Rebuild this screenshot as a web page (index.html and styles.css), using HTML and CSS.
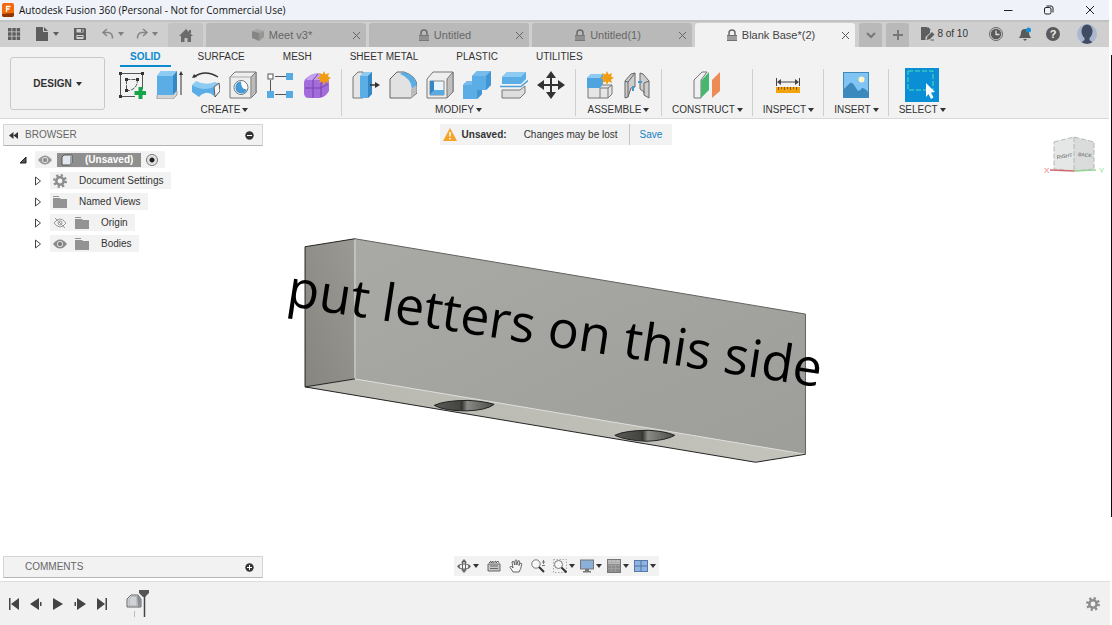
FILE: index.html
```html
<!DOCTYPE html>
<html lang="en">
<head>
    <meta charset="UTF-8">
    <meta name="viewport" content="width=device-width, initial-scale=1.0">
    <title>Autodesk Fusion 360</title>
    <link rel="stylesheet" href="styles.css">
</head>
<body>

<header class="titlebar">
    <svg class="app-logo" width="12" height="14" viewBox="0 0 12 14"><rect width="12" height="14" rx="2" fill="#f26a0c"/><path d="M0 11l12-1v2a2 2 0 0 1-2 2H2a2 2 0 0 1-2-2z" fill="#8f3405"/><path d="M4.500 9V3.500H8.500M4.500 6H7.500" fill="none" stroke="#fff" stroke-width="1.300"/></svg>
    <h1>Autodesk Fusion 360 (Personal - Not for Commercial Use)</h1>
    <div class="window-buttons">
        <button aria-label="Minimize"><svg width="12" height="12" viewBox="0 0 12 12"><path d="M2 6.500h8.500" stroke="#222"/></svg></button>
        <button aria-label="Restore"><svg width="12" height="12" viewBox="0 0 12 12" fill="none" stroke="#222"><rect x="1.500" y="3.500" width="6.500" height="6.500" rx="1.500"/><path d="M3.500 2h4.500a2 2 0 0 1 2 2v4.500"/></svg></button>
        <button aria-label="Close"><svg width="12" height="12" viewBox="0 0 12 12"><path d="M2 2l8 8M10 2l-8 8" stroke="#222"/></svg></button>
    </div>
</header>

<nav class="docbar">
    <div class="quick">
        <button aria-label="Data panel"><svg width="14" height="14" viewBox="0 0 14 14" fill="#5e5e5e"><path d="M1 1h3.500v3.500H1zM5.300 1h3.500v3.500H5.300zM9.600 1h3.500v3.500H9.600zM1 5.300h3.500v3.500H1zM5.300 5.300h3.500v3.500H5.300zM9.600 5.300h3.500v3.500H9.600zM1 9.600h3.500v3.500H1zM5.300 9.600h3.500v3.500H5.300zM9.600 9.600h3.500v3.500H9.600z"/></svg></button>
        <button aria-label="File"><svg width="14" height="14" viewBox="0 0 14 14" fill="#5e5e5e"><path d="M1 0h7v5h5v9H1zM9 0l4 4H9z"/></svg><i class="caret"></i></button>
        <button aria-label="Save"><svg width="14" height="14" viewBox="0 0 14 14" fill="#5e5e5e"><path fill-rule="evenodd" d="M1 1h11l1 1v11H1zM3.500 2v3.500h7V2zM3.500 8v4h7V8z"/><path d="M8 2h1.500v3H8zM4.500 9h5v1h-5z"/></svg></button>
        <button class="faded" aria-label="Undo"><svg width="14" height="14" viewBox="0 0 14 14" fill="none" stroke="#666" stroke-width="1.500"><path d="M6 2L2 5.500 6 9M2 5.500h5.500q4 .5 4 6"/></svg><i class="caret"></i></button>
        <button class="faded" aria-label="Redo"><svg width="14" height="14" viewBox="0 0 14 14" fill="none" stroke="#666" stroke-width="1.500"><path d="M8 2l4 3.500L8 9M12 5.500H6.500q-4 .5-4 6"/></svg><i class="caret"></i></button>
    </div>
    <div class="tabs">
        <button class="home-tab" aria-label="Home"><svg width="14" height="13" viewBox="0 0 14 13" fill="#6b6b6b"><path d="M7 0l7 7H12v6H8.500V9h-3v4H2V7H0zM10 1h2v3h-2z"/></svg></button>
        <div class="tab">
            <button class="tab-name"><svg width="14" height="14" viewBox="0 0 14 14"><path d="M1 3l6-2 6 2-5 2z" fill="#a5a5a5"/><path d="M1 3l7 2v8L1 10z" fill="#858585"/><path d="M8 5l5-2v6l-5 4z" fill="#969696"/></svg>Meet v3*</button>
            <button class="tab-close" aria-label="Close tab"><svg width="9" height="9" viewBox="0 0 9 9"><path d="M1 1l7 7M8 1L1 8" stroke="#666"/></svg></button>
        </div>
        <div class="tab">
            <button class="tab-name"><svg width="12" height="13" viewBox="0 0 12 13"><path d="M3 6V4a3 3 0 0 1 6 0v2" fill="none" stroke="#6a6a6a" stroke-width="1.500"/><path d="M1 6h10v6H1z" fill="#777"/><path d="M1 8h10M1 10h10" stroke="#aaa"/></svg>Untitled</button>
            <button class="tab-close" aria-label="Close tab"><svg width="9" height="9" viewBox="0 0 9 9"><path d="M1 1l7 7M8 1L1 8" stroke="#666"/></svg></button>
        </div>
        <div class="tab">
            <button class="tab-name"><svg width="12" height="13" viewBox="0 0 12 13"><path d="M3 6V4a3 3 0 0 1 6 0v2" fill="none" stroke="#6a6a6a" stroke-width="1.500"/><path d="M1 6h10v6H1z" fill="#777"/><path d="M1 8h10M1 10h10" stroke="#aaa"/></svg>Untitled(1)</button>
            <button class="tab-close" aria-label="Close tab"><svg width="9" height="9" viewBox="0 0 9 9"><path d="M1 1l7 7M8 1L1 8" stroke="#666"/></svg></button>
        </div>
        <div class="tab active">
            <button class="tab-name"><svg width="12" height="13" viewBox="0 0 12 13"><path d="M3 6V4a3 3 0 0 1 6 0v2" fill="none" stroke="#6a6a6a" stroke-width="1.500"/><path d="M1 6h10v6H1z" fill="#707070"/><path d="M1 8h10M1 10h10" stroke="#ccc"/></svg>Blank Base*(2)</button>
            <button class="tab-close" aria-label="Close tab"><svg width="9" height="9" viewBox="0 0 9 9"><path d="M1 1l7 7M8 1L1 8" stroke="#555"/></svg></button>
        </div>
        <button class="small-tab" aria-label="More tabs"><svg width="12" height="12" viewBox="0 0 12 12"><path d="M2 4l4 4 4-4" fill="none" stroke="#777" stroke-width="2"/></svg></button>
        <button class="small-tab" aria-label="New tab"><svg width="12" height="12" viewBox="0 0 12 12"><path d="M6 1v10M1 6h10" stroke="#777" stroke-width="2"/></svg></button>
    </div>
    <div class="account">
        <button class="quota"><svg width="15" height="14" viewBox="0 0 15 14"><path d="M1 0h6l3 3v3L5.500 10v3H1z" fill="#5e5e5e"/><path d="M8 0l3 3H8z" fill="#5e5e5e"/><path d="M6.500 13l1-3.500L12 5l2.500 2.500L10 12z" fill="#5e5e5e"/><path d="M10.500 13H14" stroke="#5e5e5e"/></svg>8 of 10</button>
        <button aria-label="Job status"><svg width="16" height="16" viewBox="0 0 16 16"><circle cx="8" cy="8" r="6.500" fill="none" stroke="#666"/><circle cx="8" cy="8" r="5.200" fill="#5a5a5a"/><path d="M8 4.500V8.500h3.500" fill="none" stroke="#ddd" stroke-width="1.300"/></svg></button>
        <button aria-label="Notifications"><svg width="16" height="16" viewBox="0 0 16 16"><path d="M1.500 12q2-1 2.500-5 0-4 4-4t4 4q.5 4 2.500 5zM6 13h4l-2 2z" fill="#5a5a5a"/><circle cx="11.500" cy="4" r="2.500" fill="#1590dc"/></svg></button>
        <button class="help" aria-label="Help"><span>?</span></button>
        <button aria-label="Profile"><svg width="20" height="20" viewBox="0 0 20 20"><defs><clipPath id="face"><circle cx="10" cy="10" r="10"/></clipPath></defs><g clip-path="url(#face)"><rect width="20" height="20" fill="#a9b7cf"/><ellipse cx="10" cy="7.500" rx="5.500" ry="7" fill="#414b61"/><path d="M7.500 12h5v4l5 4h-15l5-4z" fill="#414b61"/></g></svg></button>
    </div>
</nav>

<section class="ribbon">
    <button class="design">DESIGN <i class="caret"></i></button>
    <div class="ribbon-main">
        <div class="ribbon-tabs">
            <button class="current">SOLID</button>
            <button>SURFACE</button>
            <button>MESH</button>
            <button>SHEET METAL</button>
            <button>PLASTIC</button>
            <button>UTILITIES</button>
        </div>
        <div class="groups">
            <div class="group">
                <div class="icons">
                    <button aria-label="Create sketch"><svg viewBox="0 0 28 28"><g fill="none" stroke="#555"><path d="M3 2.500h20M2.500 3v22M3 25.500h14M24.500 4v14"/><path d="M8.500 8.500h11q0 9-8 11h-3z" stroke-dasharray="4 1"/></g><path d="M1 1h3v3H1zM23 1h3v3h-3zM1 24h3v3H1zM7 7h3v3H7zM18 7h3v3h-3zM7 18h3v3H7z" fill="#333"/><path d="M20.500 16h4v4h4v4h-4v4h-4v-4h-4v-4h4z" fill="#17a349"/></svg></button>
                    <button aria-label="Extrude"><svg viewBox="0 0 28 28"><path d="M2 24l4-4h16v4l-4 4H2z" fill="#d3d3d3" stroke="#888" stroke-width=".7"/><path d="M2 5l4-5h16v19l-4 5H2z" fill="#5bade6"/><path d="M2 5l4-5h16l-4 5z" fill="#8dcbf3"/><path d="M18 5l4-5v19l-4 5z" fill="#3486c5"/><path d="M26 24V2" stroke="#333"/><path d="M26 0l2 4h-4z" fill="#333"/></svg></button>
                    <button aria-label="Revolve"><svg viewBox="0 0 28 28"><path d="M2 6q11-8 24 0" fill="none" stroke="#333" stroke-width="1.300"/><path d="M0 7l2-4 3 3z" fill="#333"/><path d="M0 14l4-4q10 5 19 1l5 2-5 5q-9 3-17 0z" fill="#8dcbf3"/><path d="M0 14q11 7 22 2v9q-4-4-9-3-4 1-6 4l-7-5z" fill="#5bade6"/><path d="M22 16l5-4 1 8-5 6z" fill="#f4f4f4" stroke="#555"/></svg></button>
                    <button aria-label="Hole"><svg viewBox="0 0 28 28" stroke="#777"><path d="M1 6l5-5h21v21l-5 5H1z" fill="#eee"/><path d="M22 6l5-5v21l-5 5z" fill="#bbb"/><path d="M1 6h21v21" fill="none" stroke="#aaa"/><circle cx="12" cy="16.500" r="7" fill="#fff"/><path d="M12 10.500a6 6 0 1 0 6 8q-6 0-6-8z" fill="#469bd6" stroke="none"/></svg></button>
                    <button aria-label="Pattern"><svg viewBox="0 0 28 28"><path d="M9 5.500h11M4.500 9v11M9 23.500h11" stroke="#555"/><rect x="2" y="3" width="5" height="5" fill="#fff" stroke="#555"/><path d="M20 2h7v7h-7zM1 20h7v7H1zM20 20h7v7h-7z" fill="#58aae3"/></svg></button>
                    <button aria-label="Create form"><svg viewBox="0 0 28 28"><path d="M5 6q5-5 14-3 7 0 7 9v8q-4 7-10 7H6q-5 0-5-5V12q0-4 4-6z" fill="#a36cdb"/><path d="M5 6q5-5 14-3l2 2-4 4H3z" fill="#c5a0ec"/><path d="M2 17h16l7-4M10 9v18M18 9v17M10 9l5-6" stroke="#7641ae" fill="none"/><path d="M21 0l1.500 3.500L26 2l-1 3.500L28 7l-3 1.500L26 12l-3.500-1.500L21 14l-1.500-3.500L16 12l1.500-3.500L14 7l3.500-1.500L16 2l3.500 1.500z" fill="#f29c11"/></svg></button>
                </div>
                <button class="group-name">CREATE<i class="caret"></i></button>
            </div>
            <div class="group">
                <div class="icons">
                    <button aria-label="Press pull"><svg viewBox="0 0 28 28"><path d="M1 6l5-5h5v26H1z" fill="#e5e5e5" stroke="#777"/><path d="M8 5l4-4h8v22l-4 4H8z" fill="#5bade6"/><path d="M8 5l4-4h8l-4 4z" fill="#8dcbf3"/><path d="M16 5l4-4v22l-4 4z" fill="#3486c5"/><path d="M18 14h7" stroke="#333" stroke-width="1.500"/><path d="M23 11l5 3-5 3z" fill="#333"/></svg></button>
                    <button aria-label="Fillet"><svg viewBox="0 0 28 28"><path d="M1 8l7-7h7q13 4 13 15v6l-6 5H1z" fill="#e2e2e2" stroke="#666"/><path d="M11 3l3-2q12 3 14 13l-5 4Q22 7 11 3z" fill="#5bade6"/><path d="M22 18l5-3v7l-5 5z" fill="#bbb"/></svg></button>
                    <button aria-label="Shell"><svg viewBox="0 0 28 28"><path d="M1 8l6-7h20v20l-6 6H1z" fill="#eee" stroke="#777"/><path d="M21 8l6-7v20l-6 6z" fill="#c0c0c0" stroke="#777"/><path d="M4 10h14v14H4z" fill="#e9f4fc" stroke="#888"/><path d="M4 10h4v10l-4 4z" fill="#3486c5"/><path d="M4 24l4-5h10v5z" fill="#58aae3"/></svg></button>
                    <button aria-label="Combine"><svg viewBox="0 0 28 28"><path d="M0 14l4-4h5V5l5-5h14v14l-5 5h-4v4l-5 5H0z" fill="#5bade6"/><path d="M9 5l5-5h14l-5 5zM0 14l4-4h5v4z" fill="#75bcec"/><path d="M23 5l5-5v14l-5 5h-4v4l-5 5v-9h9z" fill="#4296d3"/></svg></button>
                    <button aria-label="Split body"><svg viewBox="0 0 28 28"><path d="M2 19h18l5-4v7l-5 5H2z" fill="#dedede" stroke="#777"/><path d="M2 6l5-5h19v7l-5 5H2z" fill="#5bade6"/><path d="M2 6l5-5h19l-5 5z" fill="#8dcbf3"/><path d="M0 15.500h21l7-6" fill="none" stroke="#4d9fd8" stroke-width="1.500"/></svg></button>
                    <button aria-label="Move"><svg viewBox="0 0 28 28"><path d="M14 4v20M4 14h20" stroke="#333" stroke-width="2"/><path d="M14 0l5 7H9zM14 28l5-7H9zM0 14l7-5v10zM28 14l-7-5v10z" fill="#333"/></svg></button>
                </div>
                <button class="group-name">MODIFY<i class="caret"></i></button>
            </div>
            <div class="group">
                <div class="icons">
                    <button aria-label="New component"><svg viewBox="0 0 28 28"><path d="M2 16h12v-2h12v9l-4 4H2z" fill="#e5e5e5" stroke="#777"/><path d="M14 17v10M14 17h8v10M22 17l4-3" fill="none" stroke="#777"/><path d="M1 7l4-4h12v10l-3 4H1z" fill="#4fa3df"/><path d="M1 7l4-4h12l-3 4z" fill="#8dcbf3"/><path d="M21 0l1.500 3.500L26 2l-1 3.500L28 7l-3 1.500L26 12l-3.500-1.500L21 14l-1.500-3.500L16 12l1.500-3.500L14 7l3.500-1.500L16 2l3.500 1.500z" fill="#f29c11"/></svg></button>
                    <button aria-label="Joint"><svg viewBox="0 0 28 28" stroke="#666"><path d="M2 10l6-7 4-1v14l-4 1-3 9-3 1z" fill="#cdcdcd"/><path d="M26 10l-6-7-3-1v16l4 3v3l5 3z" fill="#cdcdcd"/><path d="M2 10l3 1 7-9M5 11v15M26 10l-5 2v10" fill="none"/><path d="M10 15v5M15 11h4" stroke="#4398d4" stroke-width="2"/></svg></button>
                </div>
                <button class="group-name">ASSEMBLE<i class="caret"></i></button>
            </div>
            <div class="group">
                <div class="icons">
                    <button aria-label="Offset plane"><svg viewBox="0 0 28 28"><path d="M1 9l8-8h5l-6 8v18H1z" fill="#f0f0f0" stroke="#777"/><path d="M8 10l8-9v18l-8 8z" fill="#46b86e"/><path d="M19 9l8-8v19l-8 7z" fill="#ec8b56"/></svg></button>
                </div>
                <button class="group-name">CONSTRUCT<i class="caret"></i></button>
            </div>
            <div class="group">
                <div class="icons">
                    <button aria-label="Measure"><svg viewBox="0 0 28 28"><path d="M2.500 7v8M25.500 7v8M4 11h20" stroke="#444"/><path d="M3 11l4-3v6zM25 11l-4-3v6z" fill="#444"/><path d="M2 16h24v6H2z" fill="#f1a20d"/><path d="M4.500 16v3M7.500 16v2M10.500 16v3M13.500 16v2M16.500 16v3M19.500 16v2M22.500 16v3" stroke="#8d5d00"/></svg></button>
                </div>
                <button class="group-name">INSPECT<i class="caret"></i></button>
            </div>
            <div class="group">
                <div class="icons">
                    <button aria-label="Insert image"><svg viewBox="0 0 28 28"><rect x="1.500" y="1.500" width="25" height="25" fill="#80c4f3" stroke="#3e8abc"/><circle cx="19.500" cy="8.500" r="3" fill="#fff4c2"/><path d="M2 18l6-6q2-1 4 2l4 6q2 0 4-3 3 0 6 4v5H2z" fill="#3b89bd"/></svg></button>
                </div>
                <button class="group-name">INSERT<i class="caret"></i></button>
            </div>
            <div class="group">
                <div class="icons">
                    <button class="selected" aria-label="Select"><svg viewBox="0 0 34 34"><rect x="3" y="3" width="25" height="19" fill="none" stroke="#4fe0b5" stroke-dasharray="5 2"/><path d="M21 15l9 9-4 .5 2.500 5-2.500 1.500-2.500-5-2.500 3z" fill="#fff"/></svg></button>
                </div>
                <button class="group-name">SELECT<i class="caret"></i></button>
            </div>
        </div>
    </div>
</section>

<main class="workspace">
    <svg class="scene" viewBox="0 119 1112 463">
        <defs>
            <linearGradient id="front" x1="0" y1="0" x2="1" y2="1"><stop offset="0" stop-color="#a9aaa6"/><stop offset="1" stop-color="#9d9e9a"/></linearGradient>
            <linearGradient id="side" x1="1" y1="0" x2="0" y2="1"><stop offset="0" stop-color="#9a9993"/><stop offset="1" stop-color="#86857f"/></linearGradient>
            <linearGradient id="base" x1="0" y1="0" x2="1" y2="0"><stop offset="0" stop-color="#b8b7b0"/><stop offset="1" stop-color="#c3c2bb"/></linearGradient>
            <linearGradient id="hole" x1="0" y1="0" x2="1" y2="0"><stop offset="0" stop-color="#595955"/><stop offset=".42" stop-color="#454542"/><stop offset=".46" stop-color="#333"/><stop offset=".55" stop-color="#8a8a86"/><stop offset="1" stop-color="#4a4a47"/></linearGradient>
        </defs>
        <path d="M304.500 247L354.500 239V379.500L304.500 387.500z" fill="url(#side)"/>
        <path d="M354.500 239L806 314.500V455L354.500 379.500z" fill="url(#front)"/>
        <path d="M304.500 387.500L354.500 379.500L806 455L756 463z" fill="url(#base)"/>
        <path d="M354.500 239V379.500L806 455" fill="none" stroke="#dcdcd8"/>
        <path d="M354.500 239L806 314.500V455" fill="none" stroke="#60605d"/>
        <path d="M354.500 239L304.500 247V387.500L354.500 379.500M304.500 387.500L756 463L806 455" fill="none" stroke="#222"/>
        <path d="M434 406q10-5 34-5 17 1 26 4-8 6-28 6.500-22 0-32-5.500z" fill="url(#hole)" stroke="#222"/>
        <path d="M615 436q10-5 34-5 17 1 26 5-8 5-28 6-22-1-32-6z" fill="url(#hole)" stroke="#222"/>
        <text class="model-text" x="285" y="306" transform="rotate(8.700 285 306)">put letters on this side</text>
    </svg>

    <div class="left">
        <div class="browser">
            <div class="panel">
                <button aria-label="Collapse"><svg width="9" height="7" viewBox="0 0 9 7"><path d="M4.500 0v7L0 3.500zM9 0v7L4.500 3.500z" fill="#333"/></svg></button>
                <h2>BROWSER</h2>
                <button aria-label="Hide"><svg width="9" height="9" viewBox="0 0 9 9"><circle cx="4.500" cy="4.500" r="4.200" fill="#333"/><path d="M2 4.500h5" stroke="#fff"/></svg></button>
            </div>
            <ul class="tree">
                <li class="root">
                    <svg width="10" height="10" viewBox="0 0 10 10"><path d="M8 2v6H2z" fill="#555" stroke="#222"/></svg>
                    <div class="node">
                        <svg width="14" height="12" viewBox="0 0 14 12"><path d="M0 6q7-9 14 0-7 9-14 0z" fill="#999"/><circle cx="7" cy="6" r="3" fill="#ddd"/><circle cx="7" cy="6" r="2" fill="#888"/></svg>
                        <span class="component"><svg width="12" height="12" viewBox="0 0 12 12"><path d="M1 3l2-2h8v8l-2 2H1z" fill="#e3e7ec" stroke="#555"/><path d="M9 3l2-2v8l-2 2z" fill="#9ea5ad"/></svg><span id="root-name">(Unsaved)</span></span>
                        <input type="radio" aria-labelledby="root-name" checked>
                    </div>
                </li>
                <li>
                    <svg width="10" height="10" viewBox="0 0 10 10"><path d="M2.500 1l5 4-5 4z" fill="#fff" stroke="#444"/></svg>
                    <div class="node">
                        <svg width="14" height="14" viewBox="0 0 14 14" fill="none" stroke="#8c8c8c"><circle cx="7" cy="7" r="3.700" stroke-width="2.500"/><circle cx="7" cy="7" r="5.700" stroke-width="2.500" stroke-dasharray="2.200 2.270"/></svg>
                        <span>Document Settings</span>
                    </div>
                </li>
                <li>
                    <svg width="10" height="10" viewBox="0 0 10 10"><path d="M2.500 1l5 4-5 4z" fill="#fff" stroke="#444"/></svg>
                    <div class="node">
                        <svg width="14" height="12" viewBox="0 0 14 12"><path d="M0 0h6v1H0zM0 2h7l1 1h6v9H0z" fill="#939393"/></svg>
                        <span>Named Views</span>
                    </div>
                </li>
                <li>
                    <svg width="10" height="10" viewBox="0 0 10 10"><path d="M2.500 1l5 4-5 4z" fill="#fff" stroke="#444"/></svg>
                    <div class="node">
                        <svg width="14" height="12" viewBox="0 0 14 12" fill="none" stroke="#999"><path d="M1 6q6-8 12 0-6 8-12 0zM2 1l10 10"/><circle cx="7" cy="6" r="2"/></svg>
                        <svg width="14" height="12" viewBox="0 0 14 12"><path d="M0 0h6v1H0zM0 2h7l1 1h6v9H0z" fill="#939393"/></svg>
                        <span>Origin</span>
                    </div>
                </li>
                <li>
                    <svg width="10" height="10" viewBox="0 0 10 10"><path d="M2.500 1l5 4-5 4z" fill="#fff" stroke="#444"/></svg>
                    <div class="node">
                        <svg width="14" height="12" viewBox="0 0 14 12"><path d="M0 6q7-9 14 0-7 9-14 0z" fill="#8a8a8a"/><circle cx="7" cy="6" r="3" fill="#ddd"/><circle cx="7" cy="6" r="2" fill="#777"/></svg>
                        <svg width="14" height="12" viewBox="0 0 14 12"><path d="M0 0h6v1H0zM0 2h7l1 1h6v9H0z" fill="#939393"/></svg>
                        <span>Bodies</span>
                    </div>
                </li>
            </ul>
        </div>
        <div class="panel comments">
            <h2>COMMENTS</h2>
            <button aria-label="Add comment"><svg width="9" height="9" viewBox="0 0 9 9"><circle cx="4.500" cy="4.500" r="4.200" fill="#333"/><path d="M2 4.500h5M4.500 2v5" stroke="#fff"/></svg></button>
        </div>
    </div>

    <div class="center">
        <div class="notice">
            <svg width="14" height="13" viewBox="0 0 14 13"><path d="M7 0l7 13H0z" fill="#f5a327"/><path d="M7 4v4.500M7 10v1.500" stroke="#fff" stroke-width="1.500"/></svg>
            <strong>Unsaved:</strong>
            <span>Changes may be lost</span>
            <button>Save</button>
        </div>
        <div class="navbar">
            <button aria-label="Orbit"><svg width="14" height="14" viewBox="0 0 14 14" fill="none" stroke="#666"><ellipse cx="7" cy="7.500" rx="5.500" ry="2.500"/><path d="M5.500 3v8M8.500 3v8"/><path d="M4 3.500l3-3.500 3 3.500zM4 10.500L7 14l3-3.500zM2.500 5L0 7.500 3 10zM11.500 5L14 7.500 11 10z" fill="#666" stroke="none"/></svg><i class="caret"></i></button>
            <button aria-label="Look at"><svg width="14" height="14" viewBox="0 0 14 14"><path d="M1 5h12v7H1z" fill="#c9c9c9" stroke="#666"/><path d="M2 4l2-2v2l2-2v2l3-2v2l2-2 1 2" fill="none" stroke="#666"/><path d="M3 7h8M3 9.500h8" stroke="#666"/></svg></button>
            <button aria-label="Pan"><svg width="14" height="14" viewBox="0 0 14 14"><path d="M4 13Q3 11 1 8.500q0-1.500 1.500-1L4 9 3 3q1-1.500 2 0l.8 3L6 1.500q1-1.500 1.800 0V6L9 2q1.500-1 1.500 .5L10 6.500 11.500 4q1.500 0 1.200 1.500Q12 10 10 13z" fill="#f6f6f6" stroke="#555" stroke-width=".9"/></svg></button>
            <button aria-label="Zoom"><svg width="14" height="14" viewBox="0 0 14 14"><circle cx="5" cy="5" r="4.200" fill="#f8f8f8" stroke="#777"/><path d="M8 8l5 5" stroke="#333" stroke-width="2"/><path d="M12.500 1v4M11 3h3M11 6.500h3" stroke="#777"/></svg></button>
            <button aria-label="Fit"><svg width="14" height="14" viewBox="0 0 14 14"><rect x=".5" y=".5" width="13" height="13" fill="none" stroke="#aaa" stroke-dasharray="1.500 1.500"/><circle cx="5.500" cy="5.500" r="4" fill="#f8f8f8" stroke="#777"/><path d="M8.500 8.500l5 5" stroke="#333" stroke-width="2"/></svg><i class="caret"></i></button>
            <button aria-label="Display settings"><svg width="14" height="14" viewBox="0 0 14 14"><rect x=".5" y="1" width="13" height="9" fill="#8bb0da" stroke="#777"/><path d="M5 10h4v2h2v1.500H3V12h2z" fill="#777"/></svg><i class="caret"></i></button>
            <button aria-label="Grid and snaps"><svg width="14" height="14" viewBox="0 0 14 14"><path d="M1 1h12v4H1z" fill="#bbb"/><path d="M1 5h12v8H1z" fill="#8c8c8c"/><path d="M1 3.500h12M1 6.500h12M1 9.500h12M4.500 1v12M8.500 1v12" stroke="#a9a9a9" stroke-width=".6"/><rect x=".5" y=".5" width="13" height="13" fill="none" stroke="#777"/></svg><i class="caret"></i></button>
            <button aria-label="Viewports"><svg width="14" height="14" viewBox="0 0 14 14"><rect x=".5" y="1.500" width="13" height="11" fill="#8eb4df" stroke="#557ba8"/><path d="M7 2v10M1 7h12" stroke="#4b73a3"/></svg><i class="caret"></i></button>
        </div>
    </div>

    <div class="right">
        <svg class="viewcube" width="64" height="50" viewBox="0 0 64 50">
            <path d="M12 11L32 6V40L12 38z" fill="#e5e6e6"/>
            <path d="M32 6L52 11V38L32 40z" fill="#dadcdc"/>
            <path d="M12 11L32 6L52 11V38L32 40L12 38zM32 6V40" fill="none" stroke="#b5b7b7" stroke-dasharray="5 2"/>
            <path d="M8 39L32 40" stroke="#d4696c" stroke-width="1.500"/>
            <path d="M32 40L54 39" stroke="#96d596" stroke-width="1.500"/>
            <text x="15" y="28" transform="rotate(-8 15 28)">RIGHT</text>
            <text x="36" y="25" transform="rotate(6 36 25)">BACK</text>
            <text class="axis-x" x="2" y="42">X</text>
            <text class="axis-y" x="57" y="42">Y</text>
        </svg>
    </div>
</main>

<footer class="timeline">
    <button aria-label="Go to start"><svg width="12" height="12" viewBox="0 0 12 12" fill="#444"><path d="M1 0h1.500v12H1zM11 0v12L3 6z"/></svg></button>
    <button aria-label="Step back"><svg width="12" height="12" viewBox="0 0 12 12" fill="#444"><path d="M9 0v12L0 6zM10 4h1.500v4H10z"/></svg></button>
    <button aria-label="Play"><svg width="12" height="12" viewBox="0 0 12 12" fill="#444"><path d="M1 0v12l10-6z"/></svg></button>
    <button aria-label="Step forward"><svg width="12" height="12" viewBox="0 0 12 12" fill="#444"><path d="M3 0v12l9-6zM.5 4H2v4H.5z"/></svg></button>
    <button aria-label="Go to end"><svg width="12" height="12" viewBox="0 0 12 12" fill="#444"><path d="M1 0v12l8-6zM9.500 0H11v12H9.500z"/></svg></button>
    <svg class="history" width="26" height="30" viewBox="0 0 26 30"><path d="M2 10l4-4h7l3 4v8H2z" fill="#dde0e4" stroke="#666"/><path d="M12 7h2l2 3v6l-3 3z" fill="#8a8d92"/><path d="M4 10l3-3h4l1 3v7H4z" fill="#cfd3d8" stroke="#999" stroke-width=".6"/><path d="M9.500 22v6" stroke="#bbb"/><path d="M14 1h10v3l-4 4h-2l-4-4z" fill="#555"/><path d="M19.500 7v21" stroke="#444" stroke-width="1.500"/></svg>
    <button class="settings" aria-label="Timeline settings"><svg width="14" height="14" viewBox="0 0 14 14" fill="none" stroke="#8c8c8c"><circle cx="7" cy="7" r="3.700" stroke-width="2.500"/><circle cx="7" cy="7" r="5.700" stroke-width="2.500" stroke-dasharray="2.200 2.270"/></svg></button>
</footer>

<div class="screen-edge"></div>

</body>
</html>
```

FILE: styles.css
```css
* {
    box-sizing: border-box;
}
body {
    font-family: "Liberation Sans", Arial, sans-serif;
    font-size: 10px;
    line-height: 12px;
    color: #333;
    margin: 0;
    min-height: 100vh;
    display: flex;
    flex-direction: column;
    position: relative;
    background-color: #fff;
}
button {
    font: inherit;
    color: inherit;
    background: none;
    border: none;
    padding: 0;
    display: flex;
    align-items: center;
    justify-content: center;
    white-space: nowrap;
    cursor: pointer;
}
svg {
    display: block;
    flex: none;
}
.caret {
    border: 3px solid transparent;
    border-top: 4px solid #333;
    border-bottom: 0;
}

/* title bar */
.titlebar {
    display: flex;
    align-items: center;
    height: 20px;
    margin-right: 3px;
    padding: 0 13px 0 2px;
    background-color: #eff3f9;
}
.titlebar h1 {
    font: 10px/14px "Open Sans", "Noto Sans", sans-serif;
    color: #111;
    margin: 0 0 0 5px;
}
.window-buttons {
    display: flex;
    gap: 29px;
    margin-left: auto;
}

/* document tabs */
.docbar {
    display: flex;
    height: 27px;
    margin-right: 3px;
    background-color: #cfcfcf;
    border-top: 2px solid #c0c2c4;
}
.quick {
    display: flex;
    align-items: center;
    width: 168px;
    padding: 0 0 2px 7px;
    gap: 14px;
}
.quick button {
    gap: 4px;
}
.quick .caret {
    border-top-color: #5e5e5e;
}
.faded {
    opacity: 0.7;
}
.quick .faded {
    gap: 3px;
    margin-right: -3px;
}
.tabs {
    display: flex;
    align-items: flex-end;
    gap: 3px;
}
.tab, .home-tab, .small-tab {
    height: 24px;
    background-color: #b9b9b9;
    border-radius: 3px 3px 0 0;
}
.home-tab {
    width: 35px;
    background-color: #c3c3c3;
}
.small-tab {
    width: 23px;
    margin-left: 1px;
}
.tab {
    display: flex;
    width: 160px;
    padding: 0 5px;
    color: #666;
}
.tab-name {
    flex: 1;
    gap: 4px;
    font-size: 11px;
}
.active {
    background-color: #f2f2f2;
    color: #444;
}
.account {
    display: flex;
    align-items: center;
    gap: 13px;
    margin-left: auto;
    padding: 0 12px 2px 0;
}
.quota {
    gap: 2px;
    margin-right: 7px;
}
.help span {
    width: 14px;
    height: 14px;
    border-radius: 50%;
    background-color: #5a5a5a;
    color: #eee;
    font-weight: bold;
    font-size: 11px;
    line-height: 14px;
}
.help {
    margin-right: 4px;
}

/* ribbon */
.ribbon {
    display: flex;
    margin-right: 3px;
    padding-left: 10px;
    background-color: #f2f2f2;
    border-bottom: 1px solid #d9d9d9;
}
.design {
    width: 95px;
    height: 53px;
    margin: 10px 3px 8px 0;
    gap: 4px;
    border: 1px solid #c9c9c9;
    border-radius: 3px;
    font-weight: bold;
}
.ribbon-tabs {
    display: flex;
    gap: 16px;
    padding-left: 12px;
}
.ribbon-tabs button {
    height: 20px;
    padding: 2px 11px 0;
    border-bottom: 2px solid transparent;
}
.ribbon-tabs .current {
    color: #0a8ad0;
    font-weight: bold;
    padding: 2px 10px 0;
    border-bottom-color: #0a8ad0;
}
.groups {
    display: flex;
    padding: 2px 0;
}
.group {
    display: flex;
    flex-direction: column;
    align-items: center;
    padding: 0 10px;
    border-right: 1px solid #cfcfcf;
}
.group:nth-child(n+4) {
    padding-right: 9px;
}
.group:last-child {
    border-right: none;
}
.icons {
    display: flex;
    align-items: center;
    gap: 9px;
    height: 31px;
}
.icons svg {
    width: 28px;
    height: 28px;
}
.icons .selected {
    background-color: #0a8fd6;
}
.icons .selected svg {
    width: 34px;
    height: 34px;
}
.group-name {
    height: 12px;
    margin-top: 4px;
    gap: 2px;
}

/* canvas */
.workspace {
    flex: 1;
    position: relative;
    display: grid;
    grid-template-columns: 260px 1fr 260px;
    padding: 5px 3px 3px;
}
.scene {
    position: absolute;
    inset: 0;
    width: 100%;
    height: 100%;
}
.model-text {
    font: 52px "Open Sans", "Noto Sans", sans-serif;
    fill: #000;
}
.left, .center {
    position: relative;
    display: flex;
    flex-direction: column;
    justify-content: space-between;
}
.center {
    align-items: center;
}
.panel {
    display: flex;
    align-items: center;
    height: 22px;
    padding: 0 8px 0 5px;
    background-color: #f2f2f2;
    border: 1px solid #d5d5d5;
    border-bottom-color: #b5b5b5;
    color: #666;
}
.panel h2 {
    flex: 1;
    margin: 0 0 0 7px;
    font-size: 10px;
    font-weight: normal;
}
.comments {
    padding-left: 14px;
}
.tree {
    list-style: none;
    margin: 5px 0 0;
    padding: 0;
}
.tree li {
    display: flex;
    align-items: center;
    gap: 7px;
    margin-bottom: 4px;
    padding-left: 30px;
}
.tree .root {
    padding-left: 15px;
}
.node {
    display: flex;
    align-items: center;
    gap: 8px;
    height: 17px;
    padding: 0 7px 0 3px;
    background-color: #f2f2f2;
}
.node span {
    margin-left: 4px;
}
.root .node {
    gap: 5px;
}
.root .component {
    display: flex;
    align-items: center;
    gap: 8px;
    height: 14px;
    margin: 0;
    padding: 0 8px 0 4px;
    background-color: #8f8f8f;
    color: #fff;
    font-weight: bold;
}
.node input {
    appearance: none;
    width: 12px;
    height: 12px;
    margin: 0;
    border: 1px solid #777;
    border-radius: 50%;
    background: radial-gradient(circle, #222 0 2px, #e5e5e5 3px);
}
.notice {
    display: flex;
    align-items: center;
    gap: 5px;
    height: 21px;
    padding-left: 3px;
    background-color: #f2f2f2;
}
.notice span {
    margin: 0 6px 0 12px;
}
.notice button {
    height: 21px;
    padding: 0 10px;
    border-left: 1px solid #c5c5c5;
    color: #1380c3;
}
.navbar {
    display: flex;
    align-items: center;
    gap: 8px;
    height: 20px;
    padding: 0 3px;
    margin-bottom: 2px;
    background-color: #f2f2f2;
}
.navbar button {
    gap: 2px;
}
.navbar button:nth-child(n+5) {
    margin-right: -3px;
}
.navbar button:last-child {
    margin-right: 0;
}
.right {
    position: relative;
    display: flex;
    justify-content: flex-end;
    align-items: flex-start;
    padding: 7px 3px 0 0;
}
.viewcube text {
    font-size: 5px;
    fill: #555;
}
.viewcube .axis-x {
    font-size: 8px;
    fill: #f07c80;
}
.viewcube .axis-y {
    font-size: 8px;
    fill: #8fe08f;
}

/* timeline */
.timeline {
    display: flex;
    align-items: center;
    gap: 10px;
    height: 44px;
    margin-right: 2px;
    padding: 0 10px 0 8px;
    background-color: #f1f1f1;
    border-top: 1px solid #dedede;
}
.history {
    margin-left: 7px;
}
.settings {
    margin-left: auto;
}
.screen-edge {
    position: absolute;
    top: 55px;
    right: 0;
    bottom: 108px;
    width: 1px;
    background-color: #061018;
}
```
